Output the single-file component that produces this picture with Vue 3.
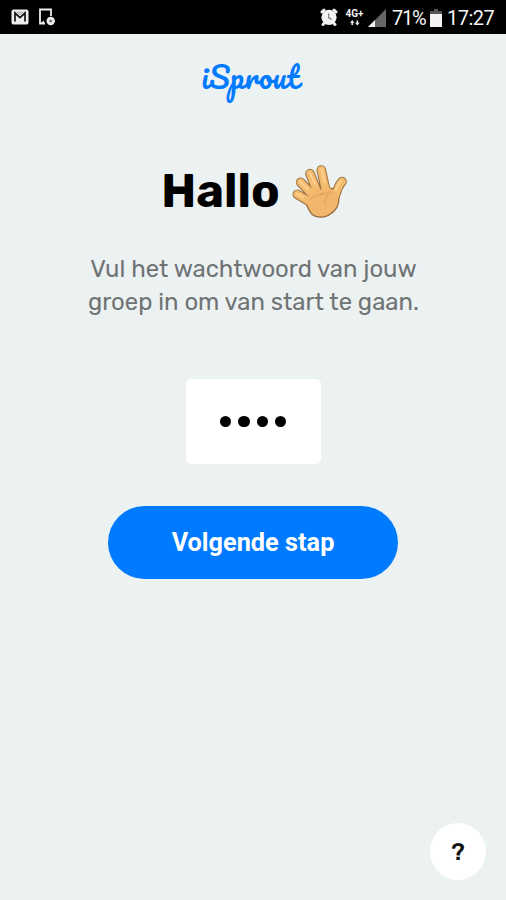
<script setup>
const digits = [1, 2, 3, 4]
</script>

<template>
  <div class="screen">
    <header class="status">
      <div class="status-left">
        <svg class="mail" viewBox="0 0 18 16">
          <rect x=".5" y=".5" width="17" height="15" rx="2" fill="#eee" />
          <path d="M4 12.5V4l5 4.6L14 4v8.500" fill="none" stroke="#111" stroke-width="1.7" />
          <path d="M4.500 2.500h9L9 6.300z" fill="#bbb" />
        </svg>
        <svg class="device" viewBox="0 0 18 18">
          <path d="M7 15.500H2V1.500h11V8" fill="none" stroke="#eee" stroke-width="1.800" />
          <path d="M2 15.500l4-3v3z" fill="#eee" />
          <circle cx="12.700" cy="13" r="4.200" fill="#eee" />
          <path d="M11.200 13h3M12.700 11.500v3" stroke="#555" stroke-width="1" />
        </svg>
      </div>
      <div class="status-right">
        <svg class="alarm" viewBox="0 0 18 18">
          <path d="M2 4L4 2M14 2L16 4M3 16.500l2-2M15 16.500l-2-2" stroke="#eee" stroke-width="3" stroke-linecap="round" />
          <circle cx="9" cy="9.300" r="7.600" fill="#f2f2f2" />
          <path d="M8.700 5.500v4.300l3 1.800" fill="none" stroke="#777" stroke-width="1.200" />
        </svg>
        <div class="network">
          <span>4G+</span>
          <svg viewBox="0 0 12 7">
            <path d="M2.700 0L5.400 3.300H3.700V6H1.700V3.300H0zM8.800 6.500L6 3.200h1.800V.5h2v2.700h1.800z" fill="#eee" />
          </svg>
        </div>
        <svg class="signal" viewBox="0 0 18 18">
          <path d="M0 18L18 0v18z" fill="#666" />
          <path d="M0 18l7-7v7z" fill="#eee" />
        </svg>
        <span class="percent">71%</span>
        <svg class="battery" viewBox="0 0 12 18">
          <path d="M4 0h4v2h4v4H0V2h4z" fill="#555" />
          <path d="M0 5h12v13H0z" fill="#f4f4f4" />
        </svg>
        <span class="time">17:27</span>
      </div>
    </header>

    <main class="content">
      <div class="logo">iSprout</div>
      <h1 class="title">
        <span class="greeting">Hallo</span>
        <svg class="hand" viewBox="36 27 168 162">
          <g fill="none" stroke-linecap="round" stroke="#99703f" stroke-width="29">
            <path d="M52 118L92 142M62 82L102 124M90 56L114 116M124 45L138 110M186 80C176 88 172 104 163 130" />
          </g>
          <path d="M80 132C91 119 104 116 113 110L150 99C162 100 167 113 174 121C181 142 171 165 152 176C137 189 110 190 96 178C85 168 82 150 76 144Z" fill="#f2b66c" stroke="#99703f" stroke-width="4" />
          <g fill="none" stroke-linecap="round" stroke="#f3bb70" stroke-width="23">
            <path d="M52 118L92 142M62 82L102 124M90 56L114 116M124 45L138 110M186 80C176 88 172 104 163 130" />
          </g>
          <path d="M84 135L112 106L150 98L172 122C178 146 166 164 149 174C133 186 112 186 99 175C89 166 85 149 84 135Z" fill="#f2b66c" />
          <g fill="none" stroke-linecap="round" stroke="#fdd18d" stroke-width="6">
            <path d="M50 116L70 127M60 79L84 103M89 53L106 88M124 41L134 83M184 78C176 84 172 94 167 106" />
          </g>
          <path d="M91 133C102 122 116 125 127 114M119 121C129 115 142 117 151 107M157 112C139 117 131 136 136 151" fill="none" stroke="#dda15b" stroke-width="3" stroke-linecap="round" />
        </svg>
      </h1>
      <p class="intro">
        <span class="line-one">Vul het wachtwoord van jouw</span><br>
        <span class="line-two">groep in om van start te gaan.</span>
      </p>
      <div class="password">
        <i v-for="digit in digits" :key="digit" class="dot"></i>
      </div>
      <button class="next">Volgende stap</button>
    </main>

    <footer class="footer">
      <button class="help">?</button>
    </footer>
  </div>
</template>

<style>
body { margin: 0; background: #ecf1f2; }
</style>

<style scoped>
.screen {
  width: 506px;
  height: 900px;
  display: flex;
  flex-direction: column;
  overflow: hidden;
  background: #ecf1f2;
  font-family: Roboto, "Liberation Sans", sans-serif;
}
.status {
  box-sizing: border-box;
  height: 34px;
  flex: none;
  display: flex;
  justify-content: space-between;
  padding: 0 11px 0 11px;
  background: #000;
  color: #f4f4f4;
}
.status-left, .status-right { display: flex; align-items: center; }
.status-left { gap: 9px; }
.mail { width: 18px; height: 16px; }
.device { width: 18px; height: 18px; }
.alarm { width: 18px; height: 18px; margin-right: 7px; }
.network {
  width: 19px;
  display: flex;
  flex-direction: column;
  align-items: center;
  font-size: 10px;
  line-height: 10px;
  font-weight: 700;
}
.network svg { width: 10px; height: 6px; margin-top: 1px; }
.signal { width: 18px; height: 18px; margin: 1px 6px 0 4px; }
.percent, .time { font-size: 20px; line-height: 34px; white-space: nowrap; padding-top: 2px; }
.percent { width: 35px; letter-spacing: -1.2px; }
.battery { width: 12px; height: 18px; margin: 1px 5px 0 3px; }
.time { width: 48px; letter-spacing: -0.5px; }
.content {
  flex: 1;
  display: flex;
  flex-direction: column;
  align-items: center;
}
.logo {
  height: 50px;
  margin-top: 20px;
  padding-right: 6px;
  color: #007aff;
  font-family: Pacifico, Lato, sans-serif;
  font-size: 30px;
  line-height: 45px;
  letter-spacing: .3px;
  font-weight: 400;
}
.title {
  height: 60px;
  margin: 57px 0 0;
  padding-left: 3px;
  display: flex;
  align-items: center;
  gap: 12px;
  font-family: Rubik, Inter, sans-serif;
  font-size: 47px;
  line-height: 60px;
  font-weight: 700;
  color: #000;
}
.greeting { padding-bottom: 1px; }
.hand { width: 56px; height: 54px; }
.intro {
  margin: 32px 0 0;
  padding-left: 1px;
  color: #6f7374;
  font-family: Rubik, Roboto, sans-serif;
  font-size: 23.900px;
  line-height: 33px;
  font-weight: 400;
  text-align: center;
  white-space: nowrap;
}
.password {
  width: 135px;
  height: 85px;
  margin-top: 60px;
  display: flex;
  align-items: center;
  justify-content: center;
  gap: 7px;
  background: #fff;
  border-radius: 5px;
}
.dot { width: 11.400px; height: 11.400px; border-radius: 50%; background: #000; }
.next {
  width: 290px;
  height: 73px;
  margin: 42px 0 0;
  padding: 0;
  border: 0;
  border-radius: 37px;
  background: #007aff;
  color: #fff;
  font: 700 25.300px/73px Roboto, sans-serif;
}
.footer { display: flex; justify-content: flex-end; padding: 0 20px 20px 0; }
.help {
  width: 56px;
  height: 57px;
  padding: 0;
  border: 0;
  border-radius: 50%;
  background: #fff;
  color: #111;
  font: 500 24px/59px Rubik, Inter, sans-serif;
}
</style>
